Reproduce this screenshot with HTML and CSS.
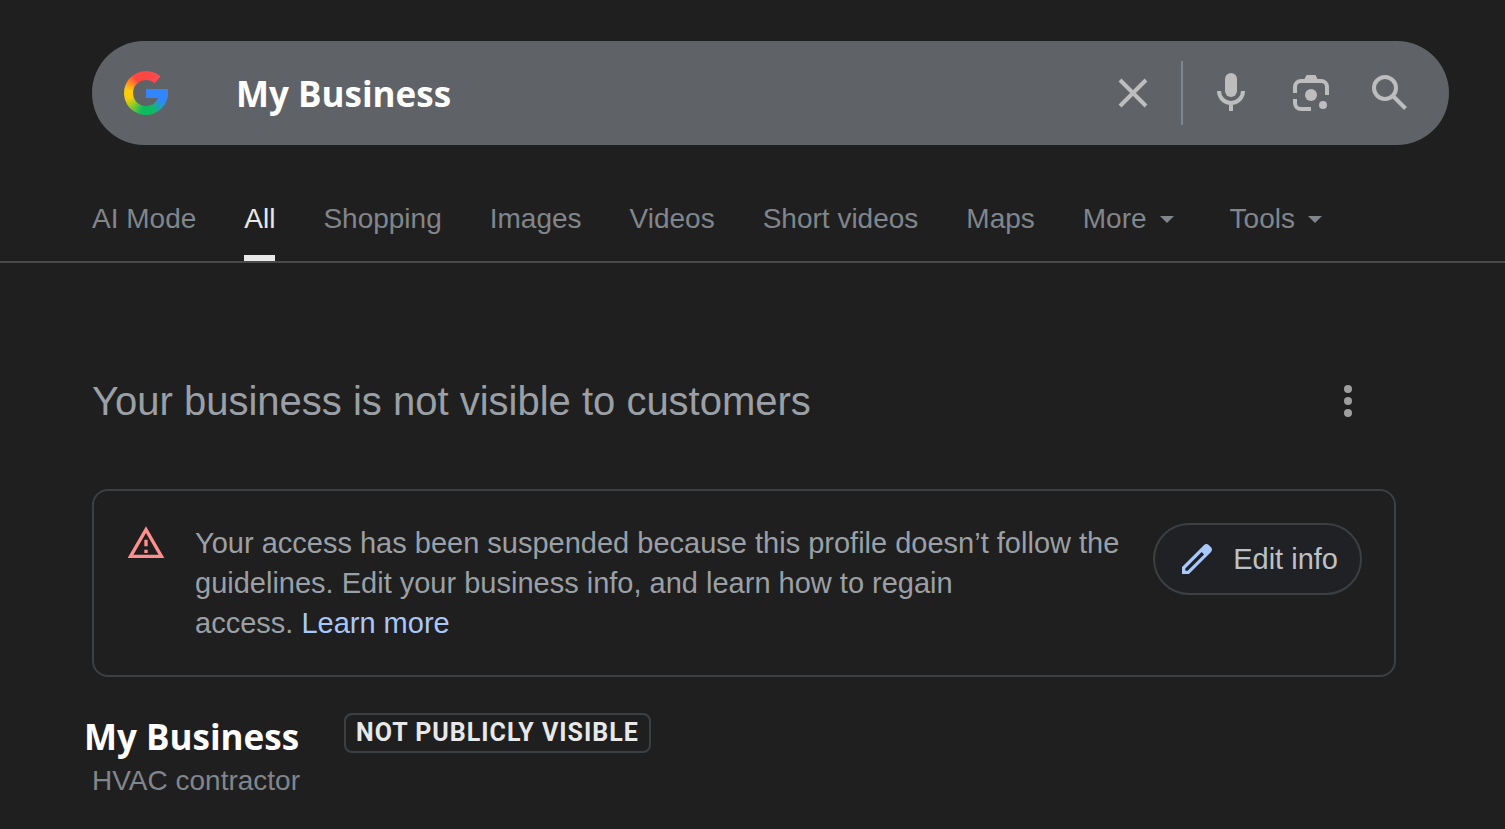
FILE: index.html
```html
<!DOCTYPE html>
<html lang="en">
<head>
    <meta charset="UTF-8">
    <meta name="viewport" content="width=device-width, initial-scale=1.0">
    <title>My Business</title>
    <link rel="stylesheet" href="styles.css">
</head>
<body>
    <header>
        <form class="search-bar" role="search">
            <span class="logo"></span>
            <input class="search-input" type="text" value="My Business" aria-label="Search">
            <button class="icon-btn" type="reset" aria-label="Clear">
                <svg viewBox="0 0 48 48"><path class="line" d="M11 11l26 26M37 11L11 37"/></svg>
            </button>
            <span class="divider"></span>
            <div class="search-tools">
                <button class="icon-btn" type="button" aria-label="Search by voice">
                    <svg viewBox="0 0 48 48">
                        <rect x="18" y="4" width="12" height="24" rx="6"/>
                        <path class="line" d="M12 22a12 12 0 0 0 24 0M24 34v8"/>
                    </svg>
                </button>
                <button class="icon-btn" type="button" aria-label="Search by image">
                    <svg viewBox="0 0 48 48">
                        <path class="line" d="M8 24v-6a6 6 0 0 1 6-6h20a6 6 0 0 1 6 6v8M8 30v4a6 6 0 0 0 6 6h10"/>
                        <path d="M17 11l2.500-5h9l2.500 5z"/>
                        <circle cx="24" cy="26" r="6"/>
                        <circle cx="36" cy="36" r="4"/>
                    </svg>
                </button>
                <button class="icon-btn" type="submit" aria-label="Search">
                    <svg viewBox="0 0 48 48">
                        <circle class="line" cx="18" cy="19" r="11"/>
                        <path class="line" d="M26 27l12.500 12.500"/>
                    </svg>
                </button>
            </div>
        </form>
        <nav class="tabs">
            <a href="#">AI Mode</a>
            <a href="#" class="active">All</a>
            <a href="#">Shopping</a>
            <a href="#">Images</a>
            <a href="#">Videos</a>
            <a href="#">Short videos</a>
            <a href="#">Maps</a>
            <button class="tab-menu" type="button">More<span class="arrow"></span></button>
            <button class="tab-menu" type="button">Tools<span class="arrow"></span></button>
        </nav>
    </header>

    <main>
        <div class="title-row">
            <h1>Your business is not visible to customers</h1>
            <button class="icon-btn more" type="button" aria-label="More options">
                <svg viewBox="0 0 48 48"><circle cx="24" cy="12" r="4"/><circle cx="24" cy="24" r="4"/><circle cx="24" cy="36" r="4"/></svg>
            </button>
        </div>

        <section class="notice">
            <svg class="warning" viewBox="0 0 24 24"><path d="M12 5.990L19.530 19H4.470L12 5.990M12 2L1 21h22L12 2zm1 14h-2v2h2v-2zm0-6h-2v4h2v-4z"/></svg>
            <p>Your access has been suspended because this profile doesn’t follow the guidelines. Edit your business info, and learn how to regain <span class="learn">access. <a href="#">Learn more</a></span></p>
            <button class="edit-btn" type="button">
                <svg viewBox="0 0 24 24"><path d="M20.410 4.940l-1.350-1.350c-.78-.78-2.050-.78-2.830 0L3 16.820V21h4.180L20.410 7.770c.79-.78.79-2.050 0-2.830zM6.410 19.060L5 19v-1.360l9.820-9.820 1.410 1.410-9.820 9.830z"/></svg>
                Edit info
            </button>
        </section>

        <section class="business">
            <div class="business-name">
                <h2>My Business</h2>
                <span class="badge">NOT PUBLICLY VISIBLE</span>
            </div>
            <p>HVAC contractor</p>
        </section>
    </main>
</body>
</html>
```

FILE: styles.css
```css
* {
    box-sizing: border-box;
}
body {
    margin: 0;
    background-color: #1f1f1f;
    color: #9aa0a6;
    font-family: Arial, "Liberation Sans", sans-serif;
    font-size: 28px;
}
h1, h2, p {
    margin: 0;
}
a {
    text-decoration: none;
}
button {
    padding: 0;
    border: none;
    background: none;
    font: inherit;
    cursor: pointer;
}
svg {
    display: block;
    fill: currentColor;
}
.line {
    fill: none;
    stroke: currentColor;
    stroke-width: 4;
}
header {
    padding-top: 41px;
    border-bottom: 2px solid #4a4a4a;
}
.search-bar {
    display: flex;
    align-items: center;
    height: 104px;
    margin: 0 56px 0 92px;
    padding: 0 34px 0 32px;
    border-radius: 52px;
    background-color: #5f6368;
}
.logo {
    flex: none;
    width: 44px;
    height: 44px;
    background:
        linear-gradient(#3186ff, #3186ff) 22px 18px / 22px 9px no-repeat,
        conic-gradient(#ff4641 0deg, #ff4b55 45deg, #3186ff 60deg, #3186ff 115deg, #0ebc5f 160deg, #0ebc5f 195deg, #b0cc1a 235deg, #ffcc0a 255deg, #ffcc0a 280deg, #ff4641 325deg);
    clip-path: path("M36.500 5.500A22 22 0 1 0 43.600 18H22V27H34A13 13 0 1 1 30.500 12.200Z");
}
.search-input {
    flex: 1;
    min-width: 0;
    margin-left: 68px;
    padding: 0;
    border: none;
    outline: none;
    background: none;
    color: #fff;
    font: bold 35px "Segoe UI", "Open Sans", sans-serif;
}
.icon-btn {
    flex: none;
    color: #bdbdbd;
}
.icon-btn svg {
    width: 48px;
    height: 48px;
}
.divider {
    width: 2px;
    height: 64px;
    margin: 0 24px;
    background-color: #80868b;
}
.search-tools {
    display: flex;
    gap: 32px;
}
.tabs {
    display: flex;
    gap: 48px;
    margin-top: 42px;
    padding-left: 92px;
    line-height: 64px;
    white-space: nowrap;
}
.tabs a {
    height: 74px;
    color: #80868b;
}
.tabs .active {
    color: #e8e8e8;
    border-bottom: 6px solid #e8e8e8;
}
.tab-menu {
    display: flex;
    align-items: center;
    height: 64px;
    margin-right: 8px;
    color: #80868b;
}
.arrow {
    margin-left: 13px;
    border: 7px solid transparent;
    border-top-color: #80868b;
    border-bottom: none;
}
main {
    padding: 114px 109px 0 92px;
}
.title-row {
    display: flex;
    align-items: center;
    justify-content: space-between;
    padding-right: 24px;
}
h1 {
    font-size: 40px;
    font-weight: normal;
    line-height: 48px;
}
.more {
    color: #9e9e9e;
}
.notice {
    display: flex;
    align-items: flex-start;
    margin-top: 64px;
    padding: 32px;
    border: 2px solid #3c4043;
    border-radius: 16px;
    font-size: 29px;
    line-height: 40px;
}
.warning {
    flex: none;
    width: 40px;
    height: 40px;
    color: #ff8f8f;
}
.notice p {
    flex: 1;
    margin: 0 32px 0 29px;
}
.learn {
    white-space: nowrap;
}
.notice a {
    color: #a8c7fa;
}
.edit-btn {
    display: flex;
    flex: none;
    align-items: center;
    gap: 16px;
    height: 72px;
    padding: 0 22px;
    border: 2px solid #3c4043;
    border-radius: 36px;
    background-color: #202124;
    color: #bdc1c6;
}
.edit-btn svg {
    width: 40px;
    height: 40px;
    color: #a8c7fa;
}
.business {
    margin-top: 36px;
}
.business-name {
    display: flex;
    gap: 45px;
    margin-left: -8px;
}
h2 {
    color: #fff;
    font: bold 35px/48px "Segoe UI", "Open Sans", sans-serif;
}
.badge {
    height: 40px;
    padding: 0 10px;
    border: 2px solid #3c4043;
    border-radius: 8px;
    color: #e8e8e8;
    font: bold 25px/36px Roboto, sans-serif;
    letter-spacing: 1px;
}
.business p {
    color: #80868b;
    line-height: 40px;
}
```
